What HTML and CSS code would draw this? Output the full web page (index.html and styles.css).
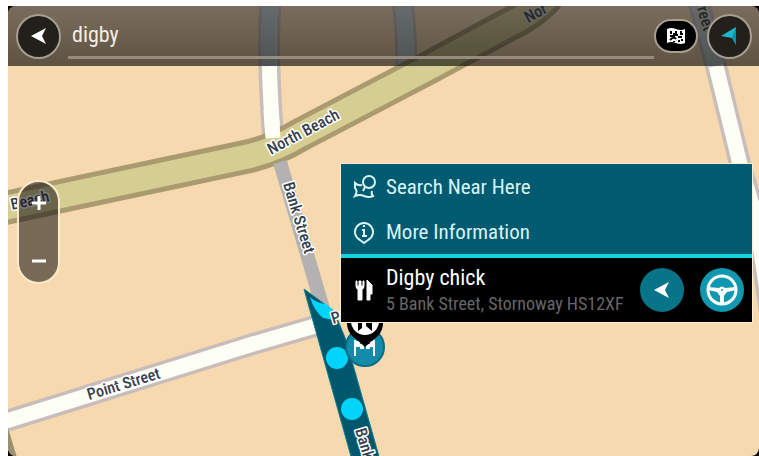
FILE: index.html
```html
<!DOCTYPE html>
<html lang="en">
<head>
    <meta charset="UTF-8">
    <meta name="viewport" content="width=device-width, initial-scale=1.0">
    <title>Navigation - search</title>
    <link rel="stylesheet" href="styles.css">
</head>
<body>
    <div class="device">
        <div class="screen">
            <!-- Map -->
            <svg class="map" viewBox="8 6 751 450" preserveAspectRatio="xMinYMin slice" aria-label="Map">
                <rect class="land" x="8" y="6" width="751" height="450"/>

                <path class="road-edge" d="M271 0 Q266 45 274 150"/>
                <path class="road-edge" d="M402 0 Q407 30 406 72"/>
                <path class="road-edge" d="M698 0 L716 66 L740 164 L755 215 Q763 260 775 350"/>
                <path class="road-edge" d="M0 423 L253 344 L325 323"/>
                <path class="road" d="M271 0 Q266 45 274 150"/>
                <path class="road" d="M402 0 Q407 30 406 72"/>
                <path class="road" d="M698 0 L716 66 L740 164 L755 215 Q763 260 775 350"/>
                <path class="road" d="M0 423 L253 344 L325 323"/>
                <path class="road-dim" d="M271 0 Q267 36 269 66 M402 0 Q407 30 406 66 M698 0 L716 66"/>
                <path class="lane-edge" d="M4 425 L14 458"/>

                <path class="main-edge" d="M0 209 L250 156 Q277 149 300 135 L430 67 L506 26 Q535 12 548 -4"/>
                <path class="main-road" d="M0 209 L250 156 Q277 149 300 135 L430 67 L506 26 Q535 12 548 -4"/>
                <path class="road" d="M271 110 L273 138"/>
                <path class="bank" d="M280 162 L324 312"/>

                <!-- Route -->
                <path class="route" d="M304 289 L334 311 L346 340 L380 460 L352 460 Z"/>
                <path class="route-dot" d="M310 297 Q316 303 326 304 L336 313 L334 320 L323 318 Q314 311 310 297 Z"/>
                <circle class="route-dot" cx="337" cy="358" r="11"/>
                <circle class="route-dot" cx="352" cy="409" r="11"/>

                <text class="label" transform="translate(271 155) rotate(-28)">North Beach</text>
                <text class="label" transform="translate(12 210) rotate(-13)">Beach</text>
                <text class="label dim" transform="translate(528 23) rotate(-28)">Nor</text>
                <text class="label dim" transform="translate(697 8) rotate(74)">reet</text>
                <text class="label" transform="translate(283 184) rotate(73)">Bank Street</text>
                <text class="label" transform="translate(89 400) rotate(-17)">Point Street</text>
                <text class="label" transform="translate(333 324) rotate(-17)">Po</text>
                <text class="label" transform="translate(355 430) rotate(73)">Bank</text>

                <!-- Destination and place pin -->
                <circle class="goal" cx="365" cy="347" r="19"/>
                <path class="goal-flag" d="M355 340 V356 M374 340 V356"/>
                <path class="goal-cloth" d="M355 341 h5 v3 h4 v5 h-4 v-2 h-5z M375 341 h-5 v3 h-4 v5 h4 v-2 h5z"/>
                <path class="pin" d="M365 347 L356 339 A18 18 0 1 1 374 339 Z"/>
                <circle class="pin-face" cx="365" cy="321" r="14"/>
                <path class="pin" d="M358 312 V331 L362 328 V312 Z M366 312 V326 L372 331 V312 Z"/>
            </svg>

            <header class="topbar">
                <button class="round-button" aria-label="Back">
                    <svg width="18" height="20" viewBox="0 0 18 20"><path d="M1 10 L16 2 L12 10 L16 18 Z" fill="#fff"/></svg>
                </button>
                <input class="search" type="text" value="digby" aria-label="Search">
                <button class="map-button" aria-label="Show results on map">
                    <svg width="20" height="18" viewBox="0 0 20 18">
                        <path d="M1 2 Q5 0 10 2 T19 2 V16 Q15 18 10 16 T1 16 Z" fill="#fff"/>
                        <path d="M5 4 V7 M4 9 H8 V6 M10 4 V8 H12 M15 4 V7 H17 M4 13 Q8 9 10 12 M12 10 H16 M13 13 V15 M16 12 V14 M8 14 V15" fill="none" stroke="#000" stroke-width="2"/>
                    </svg>
                </button>
                <button class="round-button" aria-label="Current location">
                    <svg width="20" height="22" viewBox="0 0 20 22">
                        <path d="M1 11 L16 2 V20 L12 13 Z" fill="#1cb5cb"/>
                        <path d="M12 13 L16 2 V20 Z" fill="#0d8fa5"/>
                    </svg>
                </button>
            </header>

            <main class="content">
                <div class="zoom">
                    <button aria-label="Zoom in">
                        <svg width="16" height="16" viewBox="0 0 16 16"><path d="M1 8 H15 M8 1 V15"/></svg>
                    </button>
                    <button aria-label="Zoom out">
                        <svg width="16" height="16" viewBox="0 0 16 16"><path d="M1 8 H15"/></svg>
                    </button>
                </div>

                <section class="popup">
                    <button class="action">
                        <svg width="24" height="24" viewBox="0 0 24 24">
                            <path d="M9 10 Q5 11 2 8 V13 Q5 16 2 21 Q7 19 11 21 Q16 23 20 21 Q18 19 19 16"/>
                            <circle cx="16" cy="7" r="6"/>
                            <path d="M12 12 L10 16"/>
                        </svg>
                        Search Near Here
                    </button>
                    <button class="action">
                        <svg width="24" height="24" viewBox="0 0 24 24">
                            <path d="M11 23 L7 20 A9 9 0 1 1 15 20 Z"/>
                            <path d="M10 6 H12 M9 10 H11 V16 M9 16 H14"/>
                        </svg>
                        More Information
                    </button>
                    <div class="place">
                        <svg width="24" height="24" viewBox="0 0 24 24">
                            <path d="M3 3 V8 Q3 11 5 11 V22 H9 V11 Q11 11 11 8 V3 H10 V8 H8 V3 H6 V8 H4 V3 Z" fill="#fff" stroke="#fff"/>
                            <path d="M14 2 L19 7 V16 H17 V22 H14 Z" fill="#fff" stroke="#fff"/>
                        </svg>
                        <div class="place-text">
                            <h1>Digby chick</h1>
                            <p>5 Bank Street, Stornoway HS12XF</p>
                        </div>
                        <button class="go-button" aria-label="Hide actions">
                            <svg width="18" height="20" viewBox="0 0 18 20"><path d="M1 10 L16 2 L12 10 L16 18 Z" fill="#fff"/></svg>
                        </button>
                        <button class="go-button drive" aria-label="Drive">
                            <svg width="34" height="34" viewBox="0 0 34 34">
                                <circle cx="17" cy="17" r="14" fill="none" stroke="#fff" stroke-width="3"/>
                                <path d="M3 14 L14 15 Q17 12 20 15 L31 14 V17 L22 19 L19 23 V30 H15 V23 L12 19 L3 17 Z" fill="#fff"/>
                                <circle cx="17" cy="17" r="1" fill="#1098b1"/>
                            </svg>
                        </button>
                    </div>
                </section>
            </main>
        </div>
    </div>
</body>
</html>
```
FILE: styles.css
```css
* {
    margin: 0;
    padding: 0;
    box-sizing: border-box;
}

body {
    background: #fff;
    font-family: "Roboto Condensed", Roboto, sans-serif;
}

button {
    border: none;
    background: none;
    color: inherit;
    font: inherit;
    cursor: pointer;
}

.device {
    display: flex;
    min-height: 100vh;
    padding: 6px 0 0 8px;
    background: linear-gradient(#000, #000) content-box;
}

.screen {
    position: relative;
    display: flex;
    flex: 1;
    flex-direction: column;
    overflow: hidden;
    border-radius: 8px;
}

/* Map */
.map {
    position: absolute;
    inset: 0;
    width: 100%;
    height: 100%;
}

.land {
    fill: #f6d9ae;
}

.road-edge,
.road,
.road-dim,
.main-edge,
.main-road,
.bank,
.lane-edge {
    fill: none;
}

.road-edge {
    stroke: #c8bdbb;
    stroke-width: 22;
}

.road {
    stroke: #fdfff5;
    stroke-width: 15;
}

.road-dim {
    stroke: #c9d6d5;
    stroke-width: 15;
}

.lane-edge {
    stroke: #99906f;
    stroke-width: 6;
}

.main-edge {
    stroke: #aa9a70;
    stroke-width: 34;
}

.main-road {
    stroke: #d6cd92;
    stroke-width: 24;
}

.bank {
    stroke: #b3b1b1;
    stroke-width: 14;
}

.route {
    fill: #00566a;
    stroke: #0b7f95;
}

.route-dot {
    fill: #00d4fb;
}

.label {
    fill: #35404e;
    stroke: #fff;
    stroke-width: 3px;
    stroke-linejoin: round;
    paint-order: stroke;
    font-size: 16px;
    font-weight: 500;
}

.dim {
    stroke: #d8d4b8;
}

.goal {
    fill: #128ca8;
    stroke: #0a6c85;
    stroke-width: 2;
}

.goal-flag {
    stroke: #fff;
    stroke-width: 2;
}

.goal-cloth,
.pin-face {
    fill: #fff;
}

.pin {
    fill: #000;
}

/* Search bar */
.topbar {
    position: relative;
    display: flex;
    align-items: center;
    height: 60px;
    padding: 0 7px 0 8px;
    background: linear-gradient(rgba(24, 24, 28, 0.56), rgba(0, 0, 0, 0.62));
}

.round-button,
.map-button {
    display: flex;
    align-items: center;
    justify-content: center;
    flex: none;
    border: 2px solid #a79d90;
}

.round-button {
    width: 45px;
    height: 45px;
    border-radius: 50%;
    background: #23201b;
}

.map-button {
    width: 44px;
    height: 34px;
    margin-right: 9px;
    border-radius: 17px;
    background: #000;
}

.search {
    flex: 1;
    min-width: 0;
    height: 46px;
    margin-left: 7px;
    padding: 0 4px;
    border: none;
    border-bottom: 3px solid #978b7d;
    outline: none;
    background: none;
    color: #f3eee6;
    font-family: inherit;
    font-size: 22px;
}

/* Zoom control and popup */
.content {
    position: relative;
    display: flex;
    align-items: flex-start;
    justify-content: space-between;
    padding: 98px 7px 0 9px;
}

.zoom {
    display: flex;
    flex-direction: column;
    justify-content: space-between;
    width: 43px;
    height: 104px;
    margin-top: 16px;
    border: 2px solid #fbe9cb;
    border-radius: 22px;
    background: rgba(16, 14, 14, 0.55);
}

.zoom button {
    display: flex;
    align-items: center;
    justify-content: center;
    height: 42px;
}

.zoom path {
    stroke: #fff;
    stroke-width: 3;
}

.popup {
    width: 411px;
    color: #fff;
    box-shadow: 0 0 0 1px #fdeed3;
}

.action {
    display: flex;
    align-items: center;
    gap: 9px;
    width: 100%;
    height: 45px;
    padding-left: 12px;
    background: #005b70;
    color: #d9f3f7;
    font-size: 21px;
    text-align: left;
}

.action path,
.action circle {
    fill: none;
    stroke: #d9f3f7;
    stroke-width: 2;
}

.place {
    display: flex;
    align-items: center;
    height: 68px;
    padding: 0 8px 0 12px;
    border-top: 4px solid #14d3e0;
    background: #000;
}

.place-text {
    flex: 1;
    margin-left: 9px;
    white-space: nowrap;
}

.place h1 {
    font-size: 22px;
    font-weight: normal;
    line-height: 28px;
}

.place p {
    color: #666;
    font-size: 18px;
    line-height: 24px;
}

.go-button {
    display: flex;
    align-items: center;
    justify-content: center;
    flex: none;
    width: 44px;
    height: 44px;
    border-radius: 50%;
    background: #087487;
}

.drive {
    margin-left: 16px;
    background: #1098b1;
}
```
